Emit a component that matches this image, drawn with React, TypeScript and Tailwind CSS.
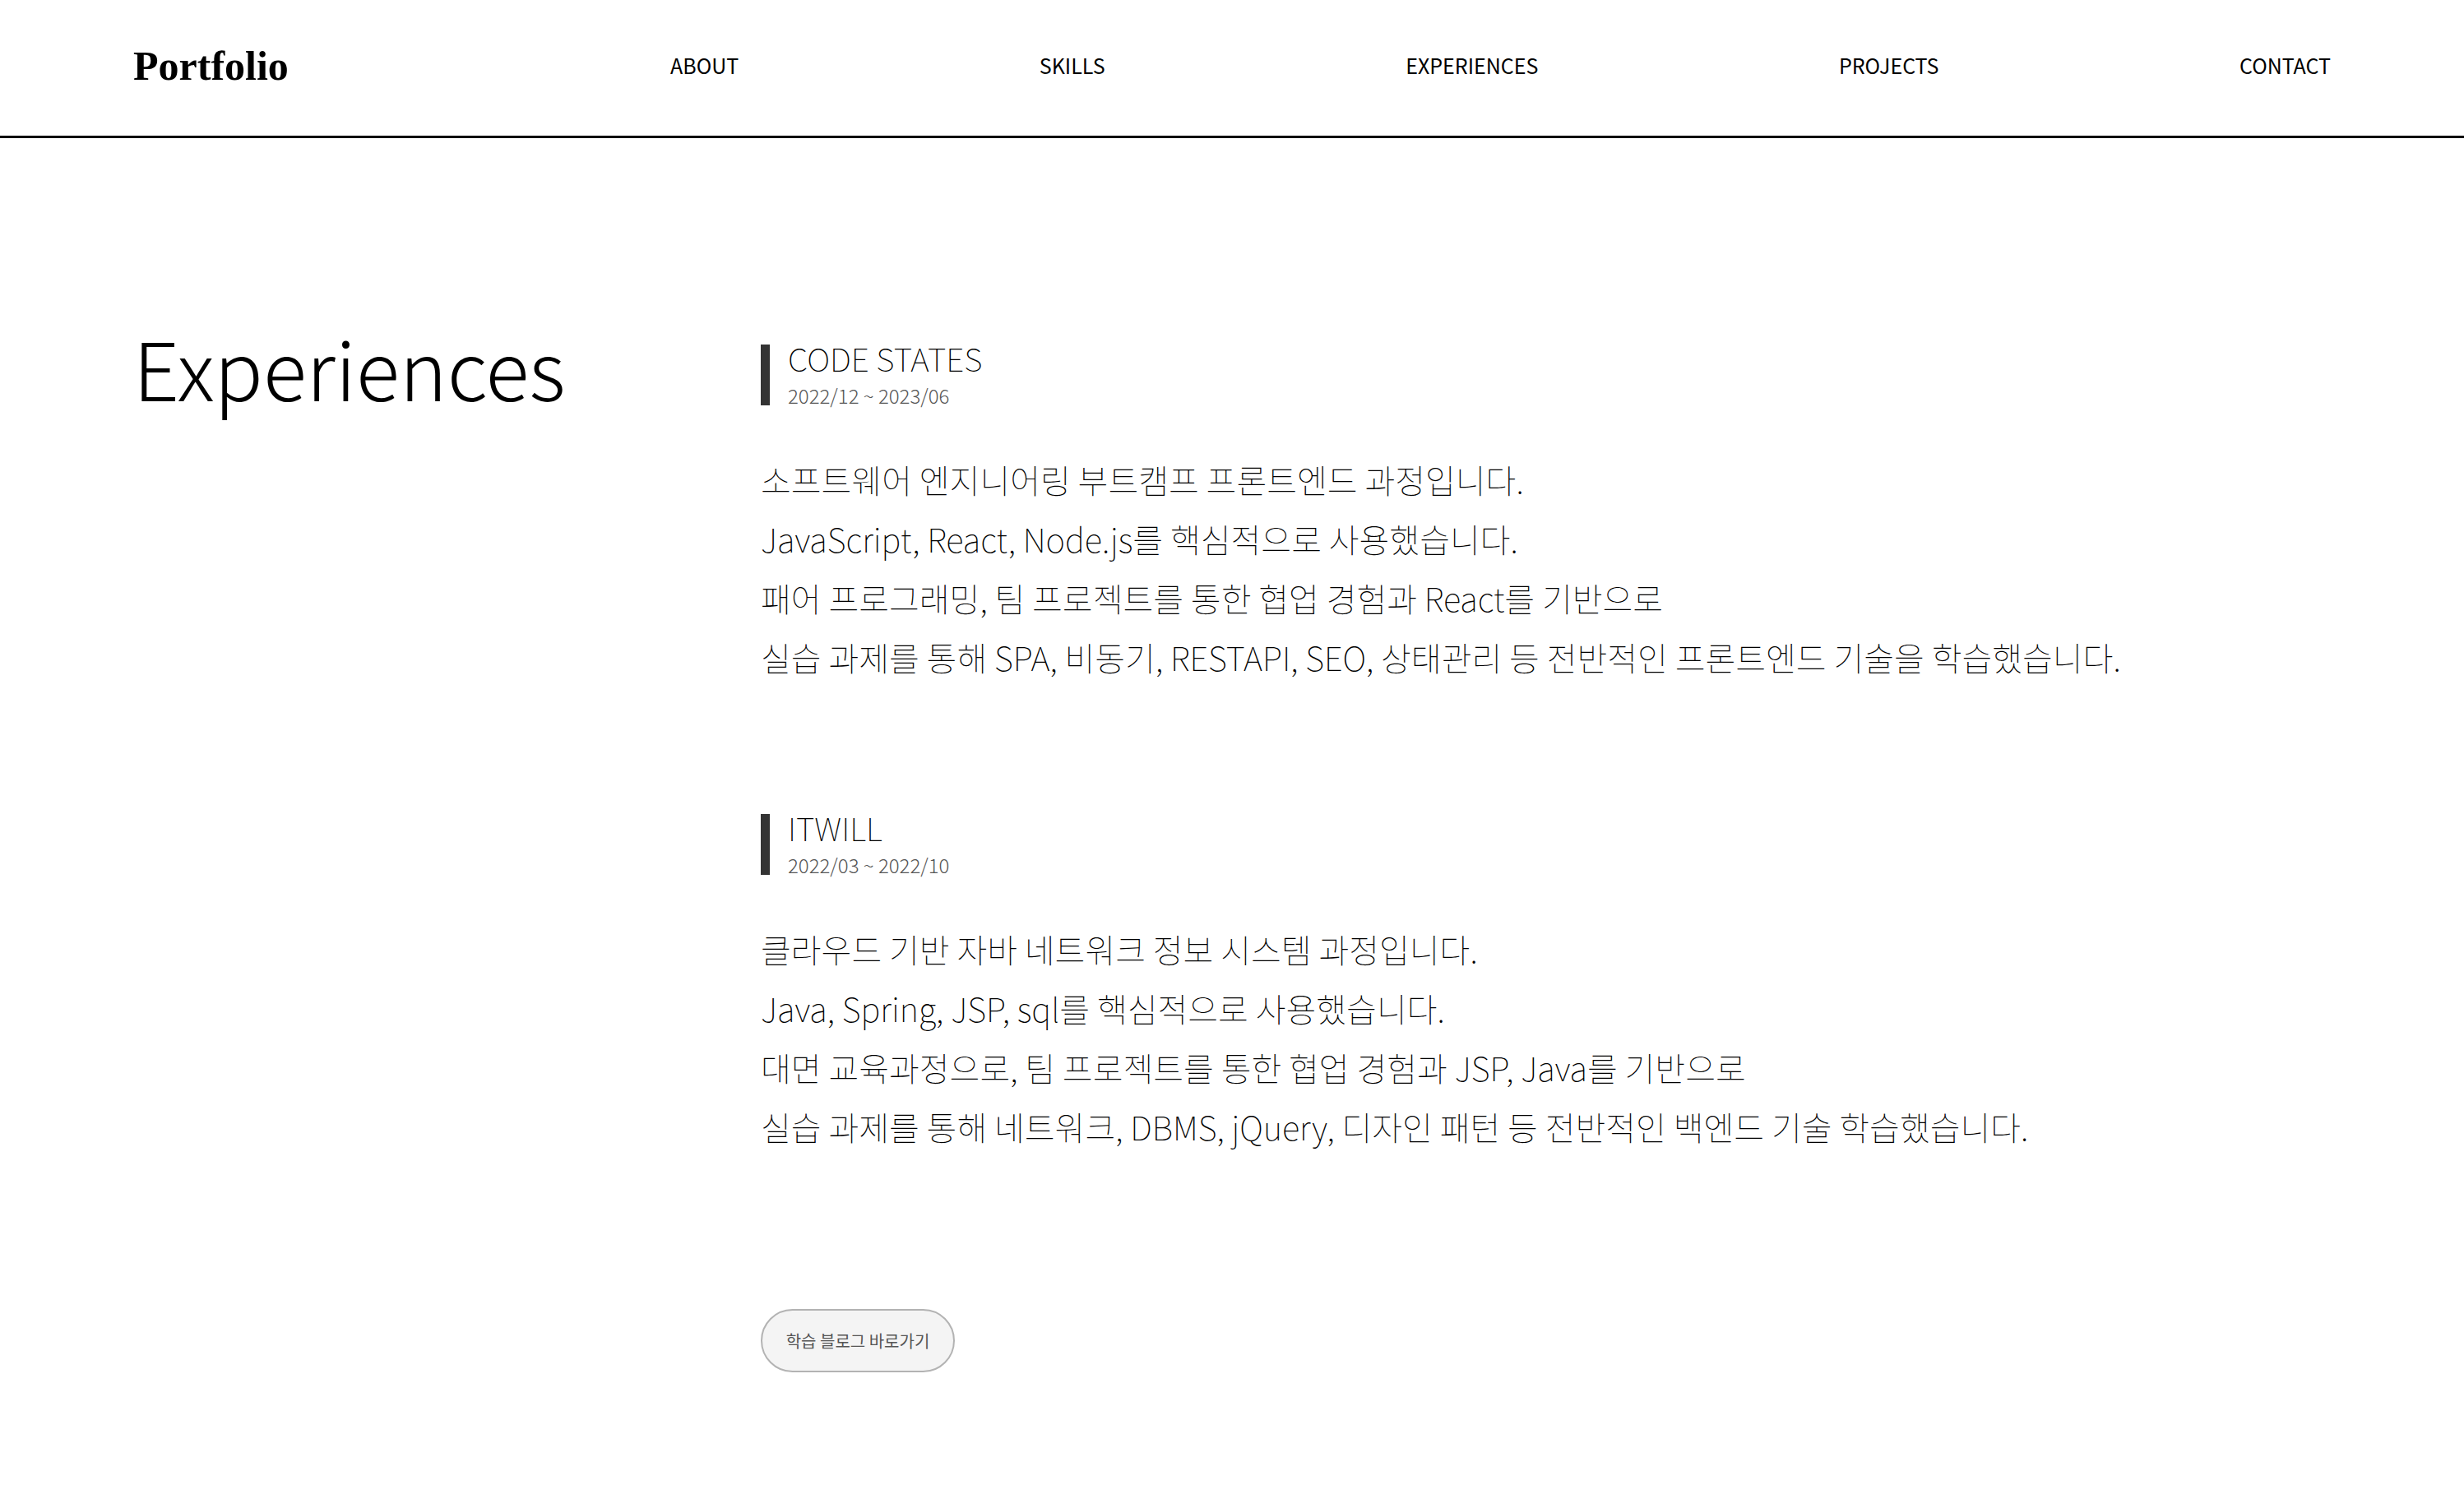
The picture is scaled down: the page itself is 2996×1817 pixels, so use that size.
import React from "react";

type Experience = {
    name: string;
    period: string;
    lines: string[];
};

const navItems = ["ABOUT", "SKILLS", "EXPERIENCES", "PROJECTS", "CONTACT"];

const experiences: Experience[] = [
    {
        name: "CODE STATES",
        period: "2022/12 ~ 2023/06",
        lines: [
            "소프트웨어 엔지니어링 부트캠프 프론트엔드 과정입니다.",
            "JavaScript, React, Node.js를 핵심적으로 사용했습니다.",
            "패어 프로그래밍, 팀 프로젝트를 통한 협업 경험과 React를 기반으로",
            "실습 과제를 통해 SPA, 비동기, RESTAPI, SEO, 상태관리 등 전반적인 프론트엔드 기술을 학습했습니다.",
        ],
    },
    {
        name: "ITWILL",
        period: "2022/03 ~ 2022/10",
        lines: [
            "클라우드 기반 자바 네트워크 정보 시스템 과정입니다.",
            "Java, Spring, JSP, sql를 핵심적으로 사용했습니다.",
            "대면 교육과정으로, 팀 프로젝트를 통한 협업 경험과 JSP, Java를 기반으로",
            "실습 과제를 통해 네트워크, DBMS, jQuery, 디자인 패턴 등 전반적인 백엔드 기술 학습했습니다.",
        ],
    },
];

const Header = () => (
    <header className="h-[168px] border-b-[3px] border-black flex items-center justify-between px-[162px] pb-[6px]">
        <h1 className="font-['Liberation_Serif',serif] font-bold text-[50px] leading-none text-black">
            Portfolio
        </h1>
        <nav className="w-[2019px] flex justify-between text-[25px] leading-none text-black">
            {navItems.map((item) => (
                <a key={item} className="cursor-pointer">
                    {item}
                </a>
            ))}
        </nav>
    </header>
);

const ExperienceItem = ({ exp }: { exp: Experience }) => (
    <div>
        <div className="border-l-[11px] border-[#333] pl-[22px]">
            <div className="text-[39px] leading-[32px] font-thin text-black">{exp.name}</div>
            <div className="mt-[18px] text-[24px] leading-[24px] font-light text-[#555]">
                {exp.period}
            </div>
        </div>
        <div className="mt-[54px] text-[40px] leading-[72px] font-thin text-black">
            {exp.lines.map((line, i) => (
                <p key={i}>{line}</p>
            ))}
        </div>
    </div>
);

export default function App() {
    return (
        <div className="min-h-screen bg-white font-['Noto_Sans_CJK_KR',sans-serif]">
            <Header />
            <main className="flex px-[162px] pt-[228px] pb-[140px]">
                <h2 className="w-[763px] shrink-0 text-[98px] leading-none font-light text-black">
                    Experiences
                </h2>
                <div className="flex flex-col gap-[155px] pt-[23px]">
                    {experiences.map((exp) => (
                        <ExperienceItem key={exp.name} exp={exp} />
                    ))}
                    <div className="mt-[31px]">
                        <button className="w-[236px] h-[77px] rounded-full border-2 border-[#b3b3b3] bg-[#f4f4f4] text-[20px] text-[#555] cursor-pointer">
                            학습 블로그 바로가기
                        </button>
                    </div>
                </div>
            </main>
        </div>
    );
}
